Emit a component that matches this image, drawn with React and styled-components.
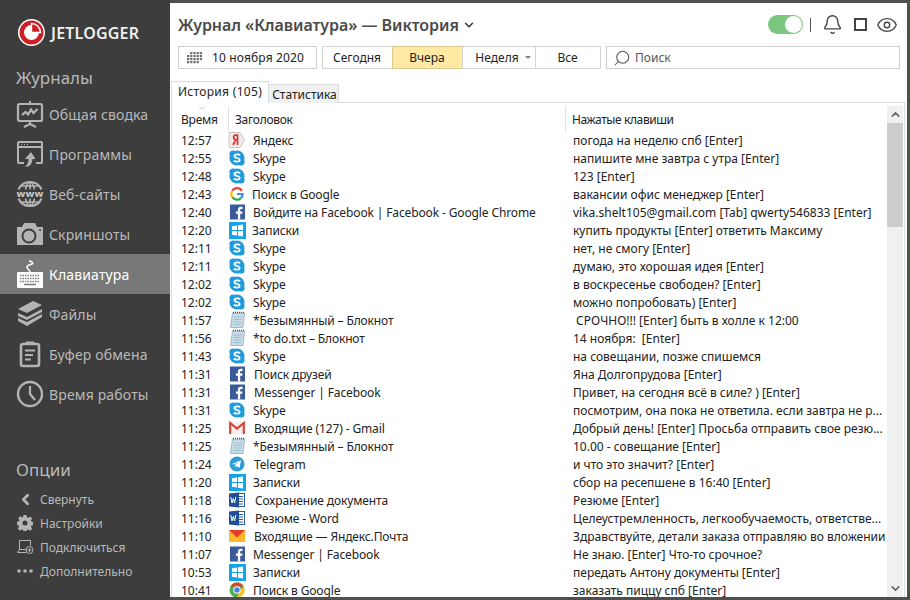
import React from 'react'
import styled, { createGlobalStyle } from 'styled-components'
import { ChevronDown, ChevronUp, ChevronLeft, Bell, Eye, Search } from 'lucide-react'

const GlobalStyle = createGlobalStyle`
    html, body {
        margin: 0;
        padding: 0;
        background: #fff;
    }
    * {
        box-sizing: border-box;
    }
`

const FONT = `"Noto Sans", "Open Sans", "Liberation Sans", sans-serif`

const rows = [
    ['12:57', 'yandex', 'Яндекс', 'погода на неделю спб [Enter]', 0],
    ['12:55', 'skype', 'Skype', 'напишите мне завтра с утра [Enter]', 0],
    ['12:48', 'skype', 'Skype', '123 [Enter]', 0],
    ['12:43', 'google', 'Поиск в Google', 'вакансии офис менеджер [Enter]', -1],
    ['12:40', 'facebook', 'Войдите на Facebook | Facebook - Google Chrome', 'vika.shelt105@gmail.com [Tab] qwerty546833 [Enter]', 0],
    ['12:20', 'windows', 'Записки', 'купить продукты [Enter] ответить Максиму', -1],
    ['12:11', 'skype', 'Skype', 'нет, не смогу [Enter]', 0],
    ['12:11', 'skype', 'Skype', 'думаю, это хорошая идея [Enter]', 0],
    ['12:02', 'skype', 'Skype', 'в воскресенье свободен? [Enter]', 0],
    ['12:02', 'skype', 'Skype', 'можно попробовать) [Enter]', 0],
    ['11:57', 'notepad', '*Безымянный – Блокнот', ' СРОЧНО!!! [Enter] быть в холле к 12:00', 0],
    ['11:56', 'notepad', '*to do.txt – Блокнот', '14 ноября:  [Enter]', 0],
    ['11:43', 'skype', 'Skype', 'на совещании, позже спишемся', 0],
    ['11:31', 'facebook', 'Поиск друзей', 'Яна Долгопрудова [Enter]', 1],
    ['11:31', 'facebook', 'Messenger | Facebook', 'Привет, на сегодня всё в силе? ) [Enter]', 1],
    ['11:31', 'skype', 'Skype', 'посмотрим, она пока не ответила. если завтра не р...', 0],
    ['11:25', 'gmail', 'Входящие (127) - Gmail', 'Добрый день! [Enter] Просьба отправить свое резю...', 1],
    ['11:25', 'notepad', '*Безымянный – Блокнот', '10.00 - совещание [Enter]', 0],
    ['11:24', 'telegram', 'Telegram', 'и что это значит? [Enter]', 1],
    ['11:20', 'windows', 'Записки', 'сбор на ресепшене в 16:40 [Enter]', 0],
    ['11:18', 'word', 'Сохранение документа', 'Резюме [Enter]', 2],
    ['11:16', 'word', 'Резюме - Word', 'Целеустремленность, легкообучаемость, ответстве...', 2],
    ['11:10', 'ymail', 'Входящие — Яндекс.Почта', 'Здравствуйте, детали заказа отправляю во вложении', 1],
    ['11:07', 'facebook', 'Messenger | Facebook', 'Не знаю. [Enter] Что-то срочное?', 0],
    ['10:53', 'windows', 'Записки', 'передать Антону документы [Enter]', 0],
    ['10:41', 'chrome', 'Поиск в Google', 'заказать пиццу спб [Enter]', 0],
]

const AppIcon = ({ type }) => {
    switch (type) {
        case 'skype':
            return (
                <svg width="18" height="18" viewBox="0 0 18 18">
                    <circle cx="9" cy="9" r="7.6" fill="#1f9bde" />
                    <circle cx="5" cy="5" r="3.6" fill="#1f9bde" />
                    <circle cx="13" cy="13" r="3.6" fill="#1f9bde" />
                    <path d="M12 6.2C11 5 6.6 4.9 6.4 7c-.2 2.6 5.4 1.500 5.300 4-.1 2.100-4.600 2-5.900.6" fill="none" stroke="#fff" strokeWidth="1.700" />
                </svg>
            )
        case 'yandex':
            return (
                <svg width="18" height="18" viewBox="0 0 18 18">
                    <path d="M2 1.500h10l4.500 7.500-4.500 7.500H2a1 1 0 0 1-1-1v-13a1 1 0 0 1 1-1z" fill="#f1ecec" stroke="#c9c4c4" />
                    <path d="M9.500 14V4.200H7.800C5 4.200 4.900 8.500 7.600 8.800L5 14M7.700 8.800h1.800" fill="none" stroke="#e0322b" strokeWidth="1.700" />
                </svg>
            )
        case 'google':
            return (
                <svg width="14" height="14" viewBox="0 0 16 16">
                    <path d="M13.600 4.400A6.500 6.500 0 0 0 2.700 4.300" fill="none" stroke="#ea4335" strokeWidth="2.500" />
                    <path d="M2.700 4.300a6.500 6.500 0 0 0 0 7.400" fill="none" stroke="#fbbc05" strokeWidth="2.500" />
                    <path d="M2.700 11.700a6.500 6.500 0 0 0 9.800 1" fill="none" stroke="#34a853" strokeWidth="2.500" />
                    <path d="M12.500 12.700A6.300 6.300 0 0 0 14.400 8H8" fill="none" stroke="#4285f4" strokeWidth="2.500" />
                </svg>
            )
        case 'facebook':
            return (
                <svg width="15" height="16" viewBox="0 0 15 16">
                    <rect width="15" height="15" y=".500" fill="#3b5a9a" />
                    <path d="M10.200 15.500V9.700h2l.3-2.300h-2.300V6c0-.7.200-1.100 1.100-1.100h1.300V2.800c-.3 0-1-.1-1.800-.1-1.800 0-2.900 1.100-2.900 3v1.700h-2v2.300h2v5.800z" fill="#fff" />
                </svg>
            )
        case 'windows':
            return (
                <svg width="17" height="17" viewBox="0 0 17 17">
                    <rect width="17" height="17" fill="#14a4ec" />
                    <path d="M3 4.300l5-.8v4.600H3zM9 3.300l5-.8v5.600H9zM3 9h5v4.600l-5-.8zM9 9h5v5.600l-5-.8z" fill="#fff" />
                </svg>
            )
        case 'notepad':
            return (
                <svg width="17" height="18" viewBox="0 0 17 18">
                    <path d="M3.500 2h12l-1.500 14.500H1.500z" fill="#c6dce8" stroke="#8aa3b0" strokeWidth=".7" />
                    <path d="M5 6h8M4.800 8.500h8M4.500 11h8M4.200 13.500h8" stroke="#9ab8c8" strokeWidth=".8" />
                    <path d="M4 1.500h11.500" stroke="#555" strokeWidth="1.500" strokeDasharray="1 1" />
                </svg>
            )
        case 'gmail':
            return (
                <svg width="16" height="14" viewBox="0 0 16 14">
                    <rect x=".500" y="1" width="15" height="12" fill="#f8eeee" />
                    <path d="M1.200 13V2l6.800 5.500L14.800 2v11" fill="none" stroke="#d9433a" strokeWidth="2.200" />
                </svg>
            )
        case 'telegram':
            return (
                <svg width="16" height="16" viewBox="0 0 16 16">
                    <circle cx="8" cy="8" r="7.500" fill="#2d9fd6" />
                    <path d="M3 8l9-3.700-1.500 7.800-3-2.100-1.200 1.500-.4-2.600 4.100-3.200-5.100 2.900z" fill="#fff" />
                </svg>
            )
        case 'word':
            return (
                <svg width="16" height="16" viewBox="0 0 16 16">
                    <rect x="7" y="1.500" width="8.500" height="13" fill="#fff" stroke="#2c5ea8" />
                    <path d="M10 4.500h4M10 7h4M10 9.500h4M10 12h4" stroke="#2c5ea8" />
                    <path d="M0 1.500L10 .5v15L0 14.500z" fill="#1f4f96" />
                    <path d="M1.800 5l1.200 6 1.300-4.500 1.300 4.500 1.200-6" fill="none" stroke="#fff" strokeWidth="1" />
                </svg>
            )
        case 'ymail':
            return (
                <svg width="16" height="14" viewBox="0 0 16 14">
                    <rect y="1" width="16" height="12" fill="#fdb92c" />
                    <path d="M0 1h16L8 8.500z" fill="#e8392b" />
                </svg>
            )
        case 'chrome':
            return (
                <svg width="16" height="16" viewBox="0 0 16 16">
                    <circle cx="8" cy="8" r="7.500" fill="#4caf50" />
                    <path d="M1.500 4.500A7.500 7.500 0 0 1 14.700 4.500H8z" fill="#e34133" />
                    <path d="M14.700 4.500A7.500 7.500 0 0 1 8 15.500L11 9z" fill="#fbc02d" />
                    <circle cx="8" cy="8" r="3.700" fill="#fff" />
                    <circle cx="8" cy="8" r="2.700" fill="#4a80e8" />
                </svg>
            )
        default:
            return null
    }
}

const Overview = () => (
    <svg width="28" height="28" viewBox="0 0 28 28" fill="none">
        <path d="M14 1v3M14 21v3M14 24l-6 3M14 24l6 3" stroke="#b4b4b4" strokeWidth="2" />
        <rect x="2" y="4" width="24" height="17" rx="1.500" stroke="#b4b4b4" strokeWidth="2.200" />
        <path d="M6 15l3.500-3 2.500 2.500 3-5 2.500 3.500 4-4" stroke="#b4b4b4" strokeWidth="2.200" />
    </svg>
)

const Programs = () => (
    <svg width="28" height="28" viewBox="0 0 28 28" fill="none">
        <path d="M8 23H3a1 1 0 0 1-1-1V3a1 1 0 0 1 1-1h22a1 1 0 0 1 1 1v19a1 1 0 0 1-1 1h-5" stroke="#b4b4b4" strokeWidth="2" />
        <path d="M2 7h24" stroke="#b4b4b4" strokeWidth="2" />
        <path d="M5 4.500h1M8 4.500h1M11 4.500h1" stroke="#b4b4b4" />
        <path d="M9 27c5 0 7-3 7.500-8h3L15 12l-6 7h3.500c0 3-1 6-3.500 8z" fill="#b4b4b4" />
    </svg>
)

const Web = () => (
    <svg width="28" height="28" viewBox="0 0 28 28" fill="none" stroke="#b4b4b4" strokeWidth="2">
        <path d="M2.500 9.500A12.500 12.500 0 0 1 25.500 9.500M2.500 18.500A12.500 12.500 0 0 0 25.500 18.500" />
        <path d="M9.500 9.500C10.500 5 12 2 14 2s3.500 3 4.500 7.500M9.500 18.500C10.500 23 12 26 14 26s3.500-3 4.500-7.500M14 2v7.500M14 18.500V26M5 6h18M5 22h18" strokeWidth="1.600" />
        <text x="14" y="17" textAnchor="middle" fontFamily={FONT} fontWeight="800" fontSize="9" fill="#c4c4c4" stroke="none" textLength="27" lengthAdjust="spacingAndGlyphs">www</text>
    </svg>
)

const Camera = () => (
    <svg width="28" height="24" viewBox="0 0 28 24">
        <path d="M1 5h5l2-4h11l2 4h6v18H1z" fill="#b4b4b4" />
        <circle cx="13" cy="14" r="6.500" fill="#b4b4b4" stroke="#3d3d3d" strokeWidth="2" />
        <circle cx="24" cy="8" r="1" fill="#3d3d3d" />
    </svg>
)

const Keyboard = () => (
    <svg width="28" height="28" viewBox="0 0 28 28" fill="none">
        <path d="M14 12c0-2-3-3-3-5s3-2 5-3-1-3-3-3" stroke="#fff" strokeWidth="1.500" />
        <rect x="1" y="12" width="26" height="16" rx="1" fill="#fff" />
        <path d="M4 15.500h20M4 18.500h20M4 21.500h20" stroke="#787878" strokeWidth="1.500" strokeDasharray="1.500 1" />
        <path d="M8 24.500h12" stroke="#787878" strokeWidth="1.500" />
    </svg>
)

const Layers = () => (
    <svg width="28" height="28" viewBox="0 0 28 28">
        <path d="M2 9L17 1l9 4-15 8z" fill="#b4b4b4" />
        <path d="M2 13l9 4 15-8v3l-15 8-9-4zM2 18l9 4 15-8v3l-15 9-9-5z" fill="#b4b4b4" />
    </svg>
)

const Clipboard = () => (
    <svg width="22" height="28" viewBox="0 0 22 28" fill="none">
        <rect x="2" y="4" width="18" height="22" rx="2" stroke="#b4b4b4" strokeWidth="2.600" />
        <path d="M7 4.500h8V2H7z" fill="#b4b4b4" stroke="#b4b4b4" />
        <path d="M6 10.500h10M6 15h8M6 19.500h6" stroke="#b4b4b4" strokeWidth="2" />
    </svg>
)

const Clock = () => (
    <svg width="28" height="28" viewBox="0 0 28 28" fill="none" stroke="#b4b4b4">
        <circle cx="14" cy="14" r="12" strokeWidth="2.400" />
        <path d="M14 6v8l5 6" strokeWidth="2.200" />
    </svg>
)

const Gear = () => (
    <svg width="16" height="16" viewBox="0 0 16 16">
        <path d="M6.500 0h3l.4 2.200 1.400.6L13.200 1.500l2 2-1.300 1.900.6 1.400 2.200.4v2.800l-2.200.4-.6 1.400 1.300 1.900-2 2-1.900-1.300-1.400.6-.4 2.200h-3l-.4-2.200-1.400-.6-1.900 1.300-2-2 1.300-1.900-.6-1.400L-.3 9.700V6.900l2.200-.4.6-1.400L1.200 3.200l2-2 1.900 1.300 1-.4z" fill="#b4b4b4" />
        <circle cx="8" cy="8" r="2.500" fill="#3d3d3d" />
    </svg>
)

const Connect = () => (
    <svg width="18" height="16" viewBox="0 0 18 16" fill="none" stroke="#b4b4b4">
        <path d="M9 10.500H2.500v-9h11v5" />
        <path d="M.5 13.500l2-3M.5 13.500H9" />
        <circle cx="12.500" cy="11" r="3.500" />
        <path d="M10.500 11h4M12.500 9v4" />
    </svg>
)

const Dots = () => (
    <svg width="16" height="4" viewBox="0 0 16 4" fill="#b4b4b4">
        <circle cx="2" cy="2" r="1.800" />
        <circle cx="8" cy="2" r="1.800" />
        <circle cx="14" cy="2" r="1.800" />
    </svg>
)

const GridGlyph = () => (
    <svg width="16" height="12" viewBox="0 0 16 12" fill="#6e6e6e">
        {[0, 1, 2, 3].flatMap((y) =>
            [0, 1, 2, 3, 4].filter((x) => !(y === 0 && x === 0) && !(y === 3 && x === 4)).map((x) => (
                <rect key={x + '-' + y} x={x * 3.200} y={y * 3} width="2.200" height="2.200" />
            ))
        )}
    </svg>
)

const Logo = () => (
    <svg width="27" height="27" viewBox="0 0 27 27">
        <circle cx="13.500" cy="13.500" r="13.500" fill="#fff" />
        <circle cx="13.500" cy="13.500" r="12" fill="#cc2027" />
        <circle cx="13.500" cy="13.500" r="7.500" fill="#fff" />
        <path d="M13.500 13.500V4.500A9 9 0 0 1 22.500 13.500z" fill="#cc2027" stroke="#fff" strokeWidth="1.400" />
    </svg>
)

const navItems = [
    ['Общая сводка', <Overview />],
    ['Программы', <Programs />],
    ['Веб-сайты', <Web />],
    ['Скриншоты', <Camera />],
    ['Клавиатура', <Keyboard />, true],
    ['Файлы', <Layers />],
    ['Буфер обмена', <Clipboard />],
    ['Время работы', <Clock />],
]

const options = [
    ['Свернуть', <ChevronLeft size={17} strokeWidth={4} color="#b4b4b4" />],
    ['Настройки', <Gear />],
    ['Подключиться', <Connect />],
    ['Дополнительно', <Dots />],
]

export default function App() {
    return (
        <Page>
            <GlobalStyle />
            <Sidebar>
                <Brand>
                    <Logo />
                    <BrandName>JETLOGGER</BrandName>
                </Brand>
                <JournalHeading>Журналы</JournalHeading>
                <Nav>
                    {navItems.map(([label, icon, active]) => (
                        <NavItem key={label} $active={active}>
                            <NavIcon>{icon}</NavIcon>
                            {label}
                        </NavItem>
                    ))}
                </Nav>
                <OptionsBlock>
                    <SideHeading>Опции</SideHeading>
                    <OptionList>
                        {options.map(([label, icon]) => (
                            <OptionItem key={label}>
                                <OptionIcon>{icon}</OptionIcon>
                                {label}
                            </OptionItem>
                        ))}
                    </OptionList>
                </OptionsBlock>
            </Sidebar>
            <Main>
                <TitleBar>
                    <Title>
                        Журнал «Клавиатура» — Виктория
                        <ChevronDown size={14} strokeWidth={2.5} color="#333" />
                    </Title>
                    <Actions>
                        <Toggle />
                        <Divider />
                        <Bell size={21} strokeWidth={1.6} color="#444" />
                        <SquareIcon />
                        <EyeWrap><Eye size={22} strokeWidth={1.5} color="#444" /></EyeWrap>
                    </Actions>
                </TitleBar>
                <Toolbar>
                    <DateButton>
                        <GridGlyph />
                        10 ноября 2020
                    </DateButton>
                    <Segments>
                        <Segment $w={71}>Сегодня</Segment>
                        <Segment $w={71} $active>Вчера</Segment>
                        <Segment $w={74} $caret>
                            Неделя
                            <MiniCaret />
                        </Segment>
                        <Segment $w={66}>Все</Segment>
                    </Segments>
                    <SearchBox>
                        <Flipped><Search size={18} strokeWidth={1.4} color="#555" /></Flipped>
                        Поиск
                    </SearchBox>
                </Toolbar>
                <Tabs>
                    <Tab $active>История (105)</Tab>
                    <Tab>Статистика</Tab>
                </Tabs>
                <Table>
                    <TableContent>
                        <HeaderRow>
                            <HeadTime>
                                <SortCaret>
                                    <ChevronDown size={10} strokeWidth={1} color="#777" />
                                </SortCaret>
                                Время
                            </HeadTime>
                            <HeadTitle>Заголовок</HeadTitle>
                            <HeadKeys>Нажатые клавиши</HeadKeys>
                        </HeaderRow>
                        {rows.map(([time, icon, title, keys, shift], i) => (
                            <Row key={i}>
                                <TimeCell>{time}</TimeCell>
                                <IconCell><AppIcon type={icon} /></IconCell>
                                <TitleCell $shift={shift}>{title}</TitleCell>
                                <KeysCell>{keys}</KeysCell>
                            </Row>
                        ))}
                    </TableContent>
                    <Scrollbar>
                        <ScrollButton><ChevronUp size={13} strokeWidth={3} color="#666" /></ScrollButton>
                        <ScrollThumb />
                        <ScrollTrack />
                        <ScrollButton><ChevronDown size={13} strokeWidth={3} color="#666" /></ScrollButton>
                    </Scrollbar>
                </Table>
            </Main>
        </Page>
    )
}

const Page = styled.div`
    display: flex;
    width: 910px;
    height: 600px;
    overflow: hidden;
    font-family: ${FONT};
`

const Sidebar = styled.aside`
    display: flex;
    flex-direction: column;
    flex: 0 0 170px;
    height: 600px;
    background: #3d3d3d;
    color: #b9b9b9;
`

const Brand = styled.div`
    display: flex;
    align-items: center;
    gap: 6px;
    height: 27px;
    margin: 19px 0 0 18px;
`

const BrandName = styled.span`
    font-size: 16px;
    font-weight: 600;
    letter-spacing: 0.2px;
    color: #eee;
`

const SideHeading = styled.div`
    height: 24px;
    padding-left: 16px;
    font-size: 17px;
    line-height: 24px;
    color: #b9b9b9;
`

const JournalHeading = styled(SideHeading)`
    margin-top: 20px;
`

const Nav = styled.nav`
    display: flex;
    flex-direction: column;
    margin-top: 4px;
`

const NavItem = styled.div`
    display: flex;
    align-items: center;
    height: 40px;
    padding-left: 16px;
    font-size: 14px;
    letter-spacing: 0.15px;
    background: ${(p) => (p.$active ? '#787878' : 'transparent')};
    color: ${(p) => (p.$active ? '#fff' : '#b9b9b9')};
`

const NavIcon = styled.span`
    display: flex;
    justify-content: center;
    width: 28px;
    margin-right: 5px;
`

const OptionsBlock = styled.div`
    display: flex;
    flex-direction: column;
    margin-top: 44px;
`

const OptionList = styled.div`
    display: flex;
    flex-direction: column;
    margin-top: 5px;
`

const OptionItem = styled.div`
    display: flex;
    align-items: center;
    height: 24px;
    padding-left: 17px;
    font-size: 12px;
    color: #b9b9b9;
`

const OptionIcon = styled.span`
    display: flex;
    align-items: center;
    width: 23px;
`

const Main = styled.main`
    display: flex;
    flex-direction: column;
    flex: 1;
    min-width: 0;
    height: 600px;
    border: solid #4f4f4f;
    border-width: 3px 3px 3px 0;
    background: #fff;
`

const TitleBar = styled.div`
    display: flex;
    align-items: center;
    justify-content: space-between;
    height: 43px;
    padding: 0 9px 0 8px;
`

const Title = styled.h1`
    display: flex;
    align-items: center;
    gap: 3px;
    margin: 0;
    font-size: 16px;
    font-weight: 600;
    letter-spacing: -0.05px;
    color: #4a4a4a;
`

const Actions = styled.div`
    display: flex;
    align-items: center;
    gap: 11px;
`

const EyeWrap = styled.span`
    display: flex;
    margin-left: -2px;
`

const Toggle = styled.div`
    position: relative;
    width: 35px;
    height: 19px;
    margin-right: -4px;
    border-radius: 10px;
    background: #7ac77f;
    &::after {
        content: '';
        position: absolute;
        top: 1px;
        right: 1px;
        width: 17px;
        height: 17px;
        border-radius: 50%;
        background: #fff;
    }
`

const Divider = styled.span`
    width: 1px;
    height: 14px;
    background: #555;
`

const SquareIcon = styled.span`
    width: 13px;
    height: 13px;
    border: 2px solid #444;
`

const Toolbar = styled.div`
    display: flex;
    gap: 5px;
    height: 23px;
    padding-left: 8px;
`

const DateButton = styled.div`
    display: flex;
    align-items: center;
    gap: 9px;
    width: 139px;
    padding-left: 8px;
    border: 1px solid #cfcfcf;
    font-size: 12px;
    letter-spacing: 0.15px;
    color: #222;
`

const Segments = styled.div`
    display: flex;
`

const Segment = styled.div`
    position: relative;
    display: flex;
    align-items: center;
    justify-content: center;
    width: ${(p) => p.$w}px;
    padding-right: ${(p) => (p.$caret ? '4px' : '1px')};
    border: 1px solid ${(p) => (p.$active ? '#dcc990' : '#d4d4d4')};
    margin-left: -1px;
    font-size: 12px;
    background: ${(p) => (p.$active ? '#ffe9a3' : '#fff')};
    color: #222;
    &:first-child {
        margin-left: 0;
    }
`

const MiniCaret = styled.span`
    position: absolute;
    right: 4px;
    top: 9px;
    border: 3px solid transparent;
    border-top: 3px solid #7a8290;
`

const SearchBox = styled.div`
    display: flex;
    align-items: center;
    gap: 4px;
    width: 294px;
    padding-left: 6px;
    border: 1px solid #cfcfcf;
    font-size: 12px;
    color: #555;
`

const Flipped = styled.span`
    display: flex;
    transform: scaleX(-1);
`

const Tabs = styled.div`
    display: flex;
    align-items: flex-end;
    height: 33px;
    margin-left: 1px;
`

const Tab = styled.div`
    display: flex;
    align-items: center;
    justify-content: center;
    height: ${(p) => (p.$active ? '22px' : '19px')};
    width: ${(p) => (p.$active ? '98px' : '70px')};
    margin-bottom: -1px;
    padding: ${(p) => (p.$active ? '0 0 3px' : '0 0 0 2px')};
    border: 1px solid #dcdcdc;
    border-bottom: 0;
    border-left: ${(p) => (p.$active ? '1px solid #dcdcdc' : '0')};
    font-size: 12px;
    letter-spacing: ${(p) => (p.$active ? '0.3px' : '0')};
    background: ${(p) => (p.$active ? '#fff' : '#f0f0f0')};
    color: #222;
    z-index: ${(p) => (p.$active ? 1 : 0)};
`

const Table = styled.div`
    display: flex;
    flex: 1;
    min-height: 0;
    margin: 0 2px 0 1px;
    border: solid #dcdcdc;
    border-width: 1px 1px 0 1px;
    overflow: hidden;
`

const TableContent = styled.div`
    flex: 1;
    min-width: 0;
    font-size: 12px;
    color: #222;
`

const HeaderRow = styled.div`
    display: grid;
    grid-template-columns: 56px 337px 1fr;
    height: 28px;
    padding-top: 3px;
`

const HeadCell = styled.div`
    display: flex;
    align-items: center;
    height: 25px;
    padding-left: 6px;
`

const HeadTime = styled(HeadCell)`
    position: relative;
    padding-left: 9px;
    padding-top: 1px;
    letter-spacing: -0.2px;
`

const SortCaret = styled.span`
    position: absolute;
    top: -3px;
    left: 25px;
    display: flex;
`

const HeadTitle = styled(HeadCell)`
    border-left: 1px solid #e2e2e2;
    padding-top: 1px;
    letter-spacing: -0.3px;
`

const HeadKeys = styled(HeadCell)`
    border-left: 1px solid #e2e2e2;
    padding-top: 1px;
    letter-spacing: -0.4px;
`

const Row = styled.div`
    display: flex;
    align-items: center;
    height: 18px;
`

const TimeCell = styled.span`
    flex: 0 0 56px;
    padding-left: 9px;
`

const IconCell = styled.span`
    display: flex;
    align-items: center;
    justify-content: center;
    flex: 0 0 18px;
`

const TitleCell = styled.span`
    flex: 0 0 319px;
    padding-left: ${(p) => 7 + p.$shift}px;
    letter-spacing: -0.13px;
    white-space: nowrap;
    overflow: hidden;
`

const KeysCell = styled.span`
    flex: 1;
    padding-left: 8px;
    white-space: pre;
    overflow: hidden;
`

const Scrollbar = styled.div`
    display: flex;
    flex-direction: column;
    flex: 0 0 16px;
    margin: 3px 1px 0 0;
    background: #f0f0f0;
`

const ScrollButton = styled.div`
    display: flex;
    align-items: center;
    justify-content: center;
    height: 17px;
`

const ScrollThumb = styled.div`
    height: 104px;
    background: #cdcdcd;
`

const ScrollTrack = styled.div`
    flex: 1;
`
